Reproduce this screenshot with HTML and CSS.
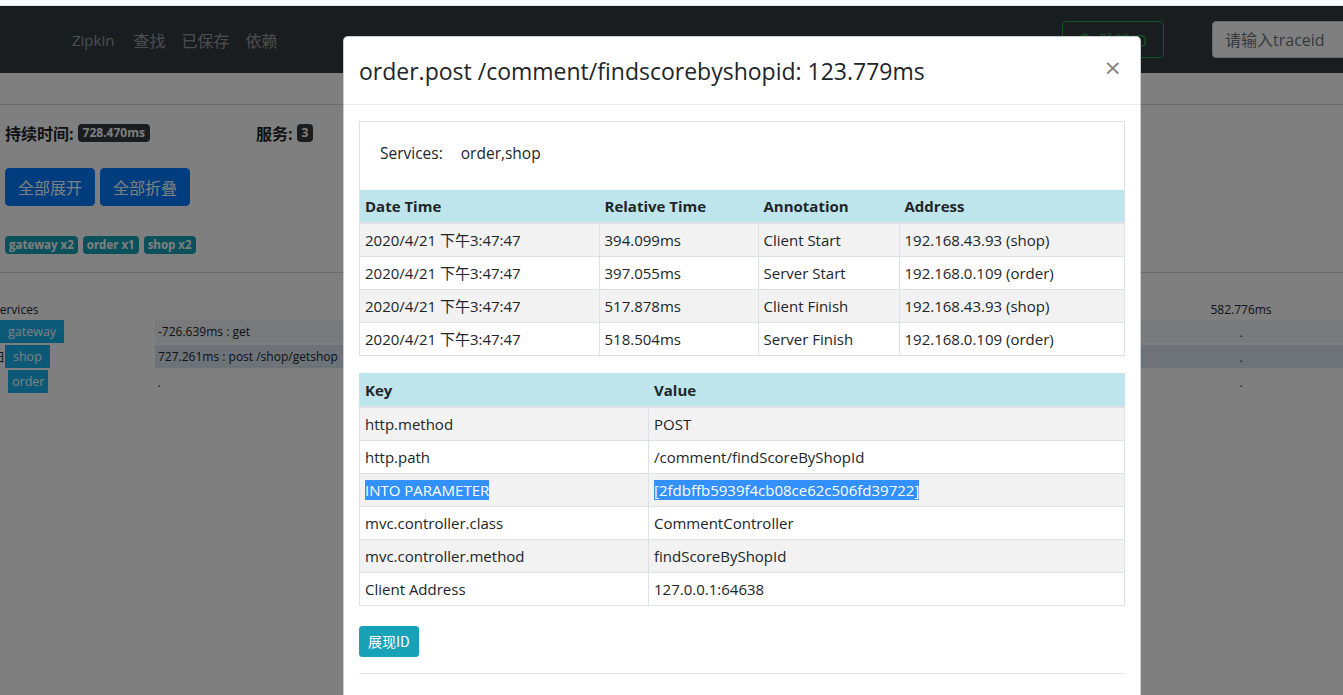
FILE: index.html
```html
<!DOCTYPE html>
<html lang="zh">
<head>
<meta charset="utf-8">
<title>Zipkin</title>
<link rel="stylesheet" href="styles.css">
</head>
<body>
<div class="topstrip"></div>
<nav class="navbar">
  <div class="nav-links">
    <span class="brand">Zipkin</span>
    <a class="nav-link">查找</a>
    <a class="nav-link">已保存</a>
    <a class="nav-link">依赖</a>
  </div>
  <div class="nav-right">
    <button class="btn-outline"><svg class="ico" viewBox="0 0 16 16" width="14" height="14"><circle cx="6.5" cy="6.5" r="5" fill="none" stroke="currentColor" stroke-width="2"/><path d="M10.5 10.5 L15 15" stroke="currentColor" stroke-width="2"/></svg>跳转ID</button>
    <input class="trace-input" type="text" placeholder="请输入traceid">
  </div>
</nav>
<div class="subbar"></div>
<main class="trace">
  <div class="summary">
    <div class="stat stat-first"><b>持续时间:</b><span class="badge badge-dark">728.470ms</span></div>
    <div class="stat"><b>服务:</b><span class="badge badge-dark">3</span></div>
  </div>
  <div class="actions">
    <button class="btn-primary">全部展开</button>
    <button class="btn-primary">全部折叠</button>
  </div>
  <div class="svc-badges">
    <span class="badge badge-info">gateway x2</span>
    <span class="badge badge-info">order x1</span>
    <span class="badge badge-info">shop x2</span>
  </div>
  <div class="timeline">
    <div class="tl-head">
      <div class="tl-label head-label">services</div>
      <div class="tl-bar"><span class="tick-label t4">582.776ms</span></div>
    </div>
    <div class="tl-row">
      <div class="tl-label"><span class="svc-box">gateway</span></div>
      <div class="tl-bar bar-1"><span class="span-text">-726.639ms : get</span><span class="dot t4">.</span></div>
    </div>
    <div class="tl-row">
      <div class="tl-label"><span class="expander">日</span><span class="svc-box">shop</span></div>
      <div class="tl-bar bar-2"><span class="span-text">727.261ms : post /shop/getshop</span><span class="dot t4">.</span></div>
    </div>
    <div class="tl-row">
      <div class="tl-label"><span class="svc-box svc-indent">order</span></div>
      <div class="tl-bar"><span class="dot t0">.</span><span class="dot t4">.</span></div>
    </div>
  </div>
</main>

<div class="backdrop"></div>

<div class="modal">
  <div class="modal-header">
    <h4 class="modal-title">order.post /comment/findscorebyshopid: 123.779ms</h4>
    <button class="close">×</button>
  </div>
  <div class="modal-body">
    <div class="card">
      <div class="services"><span class="svc-key">Services:</span><span>order,shop</span></div>
      <table class="tbl tbl-inner">
        <colgroup><col class="c-date"><col class="c-rel"><col class="c-ann"><col></colgroup>
        <thead>
          <tr><th>Date Time</th><th>Relative Time</th><th>Annotation</th><th>Address</th></tr>
        </thead>
        <tbody>
          <tr><td>2020/4/21 下午3:47:47</td><td>394.099ms</td><td>Client Start</td><td>192.168.43.93 (shop)</td></tr>
          <tr><td>2020/4/21 下午3:47:47</td><td>397.055ms</td><td>Server Start</td><td>192.168.0.109 (order)</td></tr>
          <tr><td>2020/4/21 下午3:47:47</td><td>517.878ms</td><td>Client Finish</td><td>192.168.43.93 (shop)</td></tr>
          <tr><td>2020/4/21 下午3:47:47</td><td>518.504ms</td><td>Server Finish</td><td>192.168.0.109 (order)</td></tr>
        </tbody>
      </table>
    </div>
    <table class="tbl tbl-bordered">
      <colgroup><col class="c-key"><col></colgroup>
      <thead>
        <tr><th>Key</th><th>Value</th></tr>
      </thead>
      <tbody>
        <tr><td>http.method</td><td>POST</td></tr>
        <tr><td>http.path</td><td>/comment/findScoreByShopId</td></tr>
        <tr><td><span class="sel">INTO PARAMETER </span></td><td><span class="sel">[2fdbffb5939f4cb08ce62c506fd39722]</span></td></tr>
        <tr><td>mvc.controller.class</td><td>CommentController</td></tr>
        <tr><td>mvc.controller.method</td><td>findScoreByShopId</td></tr>
        <tr><td>Client Address</td><td>127.0.0.1:64638</td></tr>
      </tbody>
    </table>
    <button class="btn-info">展现ID</button>
    <hr class="rule">
  </div>
</div>
</body>
</html>
```
FILE: styles.css
```css
* { box-sizing: border-box; }

html, body {
  margin: 0;
  height: 695px;
  overflow: hidden;
}

body {
  font-family: "Open Sans", "Noto Sans CJK SC", sans-serif;
  color: #212529;
  background: #fff;
  position: relative;
}

.topstrip {
  height: 6px;
  background: #fbfcfd;
  border-bottom: 1px solid #dfe3e8;
}

/* ---------- navbar ---------- */
.navbar {
  height: 67px;
  background: #343a40;
  display: flex;
  align-items: center;
  padding-left: 72px;
}

.nav-links {
  display: flex;
  align-items: center;
  gap: 16px;
  font-size: 16px;
  color: rgba(255, 255, 255, .5);
}

.brand { margin-right: 3px; font-size: 15px; }

.nav-right {
  margin-left: auto;
  margin-right: -30px;
  display: flex;
  align-items: center;
  gap: 48px;
}

.btn-outline {
  width: 102px;
  height: 37px;
  border: 1px solid #28a745;
  border-radius: 4px;
  background: transparent;
  color: #28a745;
  font: 16px "Open Sans", "Noto Sans CJK SC", sans-serif;
  display: flex;
  align-items: center;
  justify-content: center;
  gap: 6px;
}

.trace-input {
  width: 161px;
  height: 37px;
  border: 1px solid #ced4da;
  border-radius: 4px;
  background: #fff;
  padding: 6px 12px;
  font: 16px "Open Sans", "Noto Sans CJK SC", sans-serif;
}
.trace-input::placeholder { color: #6c757d; }

.subbar {
  height: 32px;
  border-bottom: 1px solid #d2d4d6;
}

/* ---------- trace page ---------- */
.trace { padding-top: 16px; }

.summary {
  display: flex;
  align-items: center;
  padding-left: 5px;
  height: 24px;
}

.stat {
  display: flex;
  align-items: center;
  gap: 4px;
  font-size: 16px;
}
.stat-first { width: 251px; }

.badge {
  display: inline-block;
  font-size: 12px;
  font-weight: 700;
  line-height: 14px;
  padding: 2px 5px;
  border-radius: 4px;
  color: #fff;
}
.badge-dark { background: #343a40; }
.badge-info { background: #17a2b8; font-size: 11.5px; padding: 2px 4px; }

.actions {
  display: flex;
  gap: 5px;
  padding-left: 5px;
  margin-top: 23px;
}

.btn-primary {
  height: 38px;
  padding: 6px 12px;
  border: 1px solid #007bff;
  border-radius: 4px;
  background: #007bff;
  color: #fff;
  font: 16px/24px "Noto Sans CJK SC", sans-serif;
}

.svc-badges {
  display: flex;
  gap: 5px;
  padding-left: 5px;
  margin-top: 30px;
}

.timeline {
  margin-top: 18px;
  border-top: 1px solid #d2d4d6;
  padding-top: 27px;
  font-size: 12px;
}

.tl-head, .tl-row {
  display: flex;
  height: 23px;
  align-items: center;
}
.tl-row { margin-top: 2px; height: 23px; }
.tl-head { height: 18px; }

.tl-label {
  width: 155px;
  flex: none;
  height: 100%;
  display: flex;
  align-items: stretch;
}
.head-label {
  margin-left: -6px;
  width: 161px;
  align-items: center;
}

.tl-bar {
  flex: 1;
  height: 100%;
  position: relative;
  display: flex;
  align-items: center;
}
.bar-1 { background: #f0f4f8; }
.bar-2 { background: #dbe6f1; }

.span-text { padding-left: 3px; white-space: nowrap; }

.dot, .tick-label {
  position: absolute;
  top: 50%;
  transform: translate(-50%, -50%);
}
.t0 { left: 4px; }
.t4 { left: 1086px; }

.svc-box {
  display: flex;
  align-items: center;
  background: #17b2ee;
  color: #fff;
  padding: 0 8px;
  font-size: 12.5px;
}
.svc-indent { margin-left: 8px; padding: 0 4px; }

.expander {
  width: 5px;
  overflow: hidden;
  direction: rtl;
  display: flex;
  align-items: center;
  font-size: 12px;
}

/* ---------- backdrop + modal ---------- */
.backdrop {
  position: absolute;
  left: 0;
  right: 0;
  top: 6px;
  bottom: 0;
  background: rgba(0, 0, 0, .5);
}

.modal {
  position: absolute;
  top: 36px;
  left: 343px;
  width: 798px;
  height: 700px;
  background: #fff;
  border: 1px solid rgba(0, 0, 0, .2);
  border-radius: 5px;
}

.modal-header {
  display: flex;
  align-items: flex-start;
  padding: 16px 15px 15px;
  border-bottom: 1px solid #e9ecef;
}

.modal-title {
  margin: 0;
  font-size: 23px;
  font-weight: 500;
  line-height: 36px;
}

.close {
  margin: -16px -15px -16px auto;
  padding: 20px 18px 16px;
  border: 0;
  background: transparent;
  font: 400 22px/1 "DejaVu Sans", sans-serif;
  color: #000;
  opacity: .5;
}

.modal-body { padding: 16px 15px 0; }

.card {
  border: 1px solid #dee2e6;
  border-bottom: 0;
}

.services {
  padding: 19px 20px 25px;
  font-size: 15.5px;
  line-height: 24px;
  font-weight: 500;
}
.svc-key { margin-right: 18px; }

.tbl {
  width: 100%;
  border-collapse: collapse;
  table-layout: fixed;
  font-size: 15px;
  line-height: 24px;
}
.tbl th, .tbl td {
  padding: 4px 5px;
  border: 1px solid #dee2e6;
  text-align: left;
  white-space: nowrap;
  overflow: hidden;
}
.tbl th {
  background: #bee5eb;
  font-weight: 700;
  border-bottom-width: 2px;
  border-color: #bee5eb;
  border-bottom-color: #dee2e6;
}
.tbl tbody tr:nth-child(odd) td { background: #f2f2f2; }

.tbl-inner th:first-child, .tbl-inner td:first-child { border-left: 0; }
.tbl-inner th:last-child, .tbl-inner td:last-child { border-right: 0; }
.tbl-inner th { border-top: 0; }

.c-date { width: 239px; }
.c-rel { width: 159px; }
.c-ann { width: 141px; }
.c-key { width: 289px; }

.tbl-bordered { margin-top: 17px; }

.sel {
  background: #3390ff;
  color: #fff;
}

.btn-info {
  display: block;
  margin-top: 20px;
  height: 31px;
  padding: 3px 8px;
  border: 1px solid #17a2b8;
  border-radius: 3px;
  background: #17a2b8;
  color: #fff;
  font: 14px/21px "Noto Sans CJK SC", sans-serif;
}

.rule {
  margin: 16px 0 0;
  border: 0;
  border-top: 1px solid rgba(0, 0, 0, .1);
}
```
